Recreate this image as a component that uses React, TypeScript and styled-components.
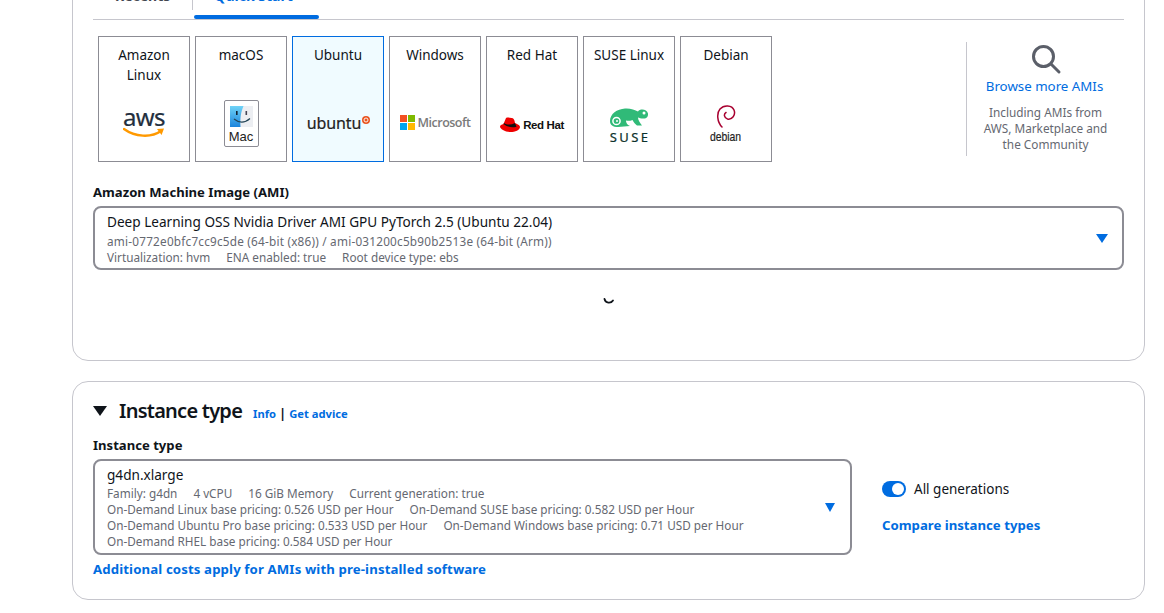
import React from "react";
import styled, { createGlobalStyle } from "styled-components";

const GlobalStyle = createGlobalStyle`
  html, body {
    margin: 0;
    padding: 0;
    background: #fff;
    height: 613px;
    overflow: hidden;
    font-family: "Noto Sans", "Open Sans", sans-serif;
    color: #0f141a;
  }
`;

const Page = styled.div`
  display: flex;
  flex-direction: column;
  gap: 20px;
  margin-top: -41px;
  padding: 0 19px 0 72px;
`;

const Panel = styled.section<{ $height: number }>`
  box-sizing: border-box;
  height: ${(props) => props.$height}px;
  border: 1px solid #c6c6cd;
  border-radius: 16px;
  padding: 0 20px;
  background: #fff;
`;

const Tabs = styled.div`
  display: flex;
  align-items: flex-start;
  height: 60px;
  padding-top: 26px;
  box-sizing: border-box;
  border-bottom: 1px solid #c6c6cd;
`;

const Tab = styled.div<{ $active?: boolean }>`
  position: relative;
  box-sizing: border-box;
  height: 33px;
  font-size: 14px;
  font-weight: 700;
  line-height: 20px;
  padding: 0 ${(props) => (props.$active ? "20px" : "22px")};
  width: ${(props) => (props.$active ? "125px" : "auto")};
  color: ${(props) => (props.$active ? "#006ce0" : "#424650")};
  margin-left: ${(props) => (props.$active ? "1px" : "0")};
  &::after {
    content: "";
    display: ${(props) => (props.$active ? "block" : "none")};
    position: absolute;
    left: 0;
    right: 0;
    bottom: 0;
    height: 4px;
    border-radius: 4px;
    background: #006ce0;
  }
`;

const TabDivider = styled.div`
  width: 1px;
  height: 24px;
  background: #c6c6cd;
`;

const OsRow = styled.div`
  display: flex;
  align-items: flex-start;
  margin-top: 16px;
  padding-left: 5px;
`;

const Cards = styled.div`
  display: flex;
  gap: 5px;
`;

const Card = styled.div<{ $selected?: boolean }>`
  box-sizing: border-box;
  width: 92px;
  height: 126px;
  display: flex;
  flex-direction: column;
  align-items: center;
  padding-top: 8px;
  border: 1px solid ${(props) => (props.$selected ? "#006ce0" : "#8c8c94")};
  background: ${(props) => (props.$selected ? "#f0fbff" : "#fff")};
`;

const CardTitle = styled.div`
  height: 40px;
  font-size: 13.5px;
  line-height: 20px;
  text-align: center;
  white-space: pre-line;
  color: #0f141a;
`;

const LogoSlot = styled.div`
  flex: 1;
  align-self: stretch;
  display: flex;
  align-items: center;
  justify-content: center;
  padding-bottom: 4px;
`;

const AwsLogo = styled.div`
  display: flex;
  flex-direction: column;
  align-items: center;
  gap: 1px;
  margin-top: 3px;
`;

const AwsWord = styled.span`
  font-size: 24px;
  line-height: 19px;
  letter-spacing: -0.6px;
  -webkit-text-stroke: 0.2px #232f3e;
  color: #232f3e;
`;

const MacBox = styled.div`
  box-sizing: border-box;
  width: 35px;
  height: 47px;
  margin-top: 5px;
  display: flex;
  flex-direction: column;
  align-items: center;
  padding-top: 5px;
  border: 1px solid #8c8c94;
  border-radius: 2px;
`;

const MacLabel = styled.span`
  font-family: "Liberation Sans", sans-serif;
  font-size: 13px;
  line-height: 16px;
  margin-top: 2px;
  color: #222;
`;

const UbuntuLogo = styled.div`
  display: flex;
  align-items: flex-start;
  gap: 1px;
  margin-top: 4px;
  margin-left: 1px;
`;

const UbuntuWord = styled.span`
  font-size: 16px;
  line-height: 20px;
  letter-spacing: -0.1px;
  -webkit-text-stroke: 0.2px #222;
  color: #222;
`;

const LogoRow = styled.div<{ $top: number }>`
  display: flex;
  align-items: center;
  gap: 3px;
  margin-top: ${(props) => props.$top}px;
`;

const MsWord = styled.span`
  font-family: "Open Sans", sans-serif;
  font-size: 12.5px;
  font-weight: 600;
  letter-spacing: -0.5px;
  color: #7a7a7a;
`;

const RedHatWord = styled.span`
  font-family: "Liberation Sans", sans-serif;
  font-size: 11.5px;
  font-weight: 700;
  letter-spacing: -0.4px;
  color: #111;
`;

const LogoStack = styled.div<{ $gap: number; $top: number }>`
  display: flex;
  flex-direction: column;
  align-items: center;
  gap: ${(props) => props.$gap}px;
  margin-top: ${(props) => props.$top}px;
`;

const SuseWord = styled.span`
  font-size: 13px;
  line-height: 14px;
  letter-spacing: 2.4px;
  margin-right: -2px;
  -webkit-text-stroke: 0.2px #0c322c;
  color: #0c322c;
`;

const DebianWord = styled.span`
  font-family: "Liberation Sans", sans-serif;
  font-size: 13px;
  line-height: 13px;
  -webkit-text-stroke: 0.2px #222;
  transform: scaleX(0.8);
  color: #222;
`;

const BrowseBox = styled.div`
  box-sizing: border-box;
  width: 158px;
  height: 114px;
  margin: 6px 0 0 auto;
  border-left: 1px solid #c6c6cd;
  display: flex;
  flex-direction: column;
  align-items: center;
`;

const SearchIcon = styled.svg`
  margin-top: 2px;
`;

const BrowseLink = styled.div`
  font-size: 13.3px;
  line-height: 18px;
  margin-top: 1px;
  margin-right: 2px;
  color: #006ce0;
`;

const BrowseNote = styled.div`
  font-size: 11.8px;
  line-height: 16px;
  margin-top: 9px;
  text-align: center;
  color: #656871;
`;

const FieldLabel = styled.div<{ $top: number }>`
  font-size: 13.1px;
  font-weight: 700;
  line-height: 18px;
  margin-top: ${(props) => props.$top}px;
  margin-bottom: 5px;
  color: #0f141a;
`;

const SelectBox = styled.div<{ $width?: number; $height: number; $end: number }>`
  box-sizing: border-box;
  width: ${(props) => (props.$width ? `${props.$width}px` : "100%")};
  height: ${(props) => props.$height}px;
  display: flex;
  align-items: center;
  justify-content: space-between;
  padding: 0 ${(props) => props.$end}px 0 12px;
  border: 2px solid #8c8c94;
  border-radius: 8px;
  background: #fff;
`;

const SelectText = styled.div<{ $gap: number }>`
  display: flex;
  flex-direction: column;
  padding-top: ${(props) => props.$gap}px;
  & > div:first-child {
    margin-bottom: ${(props) => props.$gap}px;
  }
`;

const SelectTitle = styled.div`
  font-size: 13.6px;
  line-height: 18px;
  color: #0f141a;
`;

const SelectLine = styled.div`
  display: flex;
  gap: 16px;
  font-size: 11.75px;
  line-height: 16px;
  white-space: nowrap;
  color: #656871;
`;

const AmiIds = styled(SelectLine)`
  letter-spacing: 0.22px;
`;

const Caret = styled.svg`
  flex: none;
  fill: #006ce0;
`;

const SpinnerSlot = styled.div`
  display: flex;
  justify-content: center;
  margin-top: 27px;
  margin-left: 1px;
`;

const PanelHeader = styled.div`
  display: flex;
  align-items: center;
  height: 28px;
  margin-top: 15px;
`;

const Expand = styled.svg`
  flex: none;
  margin-right: 12px;
  fill: #0f141a;
`;

const Heading = styled.h2`
  margin: 0 11px 0 0;
  font-size: 20px;
  font-weight: 600;
  line-height: 24px;
  letter-spacing: -0.75px;
  color: #0f141a;
`;

const InfoRow = styled.div`
  display: flex;
  align-items: center;
  gap: 3px;
  font-size: 11.2px;
  font-weight: 700;
  margin-top: 4px;
  color: #006ce0;
`;

const InfoBar = styled.span`
  font-size: 13px;
  line-height: 14px;
  font-weight: 700;
  color: #0f141a;
`;

const TypeRow = styled.div`
  display: flex;
  align-items: flex-start;
`;

const SidePanel = styled.div`
  display: flex;
  flex-direction: column;
  margin: 21px 0 0 30px;
`;

const ToggleRow = styled.div`
  display: flex;
  align-items: center;
  gap: 8px;
  font-size: 13.5px;
  line-height: 18px;
  color: #0f141a;
`;

const Toggle = styled.div`
  position: relative;
  width: 24px;
  height: 16px;
  border-radius: 8px;
  background: #006ce0;
  &::after {
    content: "";
    position: absolute;
    top: 2px;
    right: 2px;
    width: 12px;
    height: 12px;
    border-radius: 50%;
    background: #fff;
  }
`;

const BoldLink = styled.div<{ $top: number }>`
  font-size: 13.2px;
  font-weight: 700;
  line-height: 18px;
  margin-top: ${(props) => props.$top}px;
  white-space: nowrap;
  color: #006ce0;
`;

const WideLink = styled(BoldLink)`
  letter-spacing: 0.13px;
`;

const AmazonSmile = () => (
  <svg width="42" height="12" viewBox="0 0 42 12">
    <path d="M1 2 C12 10 28 11 38 4" fill="none" stroke="#f90" strokeWidth="2.4" strokeLinecap="round" />
    <path d="M34 2 L41 1.6 L38.6 8 Z" fill="#f90" />
  </svg>
);

const FinderIcon = () => (
  <svg width="23" height="21" viewBox="0 0 23 21">
    <defs>
      <linearGradient id="finderBlue" x1="0" y1="0" x2="0" y2="1">
        <stop offset="0" stopColor="#6fd3f7" />
        <stop offset="1" stopColor="#1b84dc" />
      </linearGradient>
    </defs>
    <rect width="23" height="21" fill="#eceef2" />
    <path d="M0 0 H13.500 C11 6 10 11 10.500 21 H0 Z" fill="url(#finderBlue)" />
    <rect x="6" y="5" width="1.600" height="4" fill="#123" />
    <rect x="15.500" y="5" width="1.600" height="4" fill="#445" />
    <path d="M4 13 C9 17 15 17 20 12.500" fill="none" stroke="#245" strokeWidth="1.100" />
  </svg>
);

const UbuntuMark = () => (
  <svg width="8" height="8" viewBox="0 0 8 8" style={{ marginTop: 3 }}>
    <circle cx="4" cy="4" r="4" fill="#e95420" />
    <circle cx="4" cy="4" r="2" fill="none" stroke="#fff" strokeWidth="0.900" />
  </svg>
);

const MicrosoftMark = () => (
  <svg width="15" height="15" viewBox="0 0 15 15">
    <rect width="7" height="7" fill="#f25022" />
    <rect x="8" width="7" height="7" fill="#7fba00" />
    <rect y="8" width="7" height="7" fill="#00a4ef" />
    <rect x="8" y="8" width="7" height="7" fill="#ffb900" />
  </svg>
);

const RedHatMark = () => (
  <svg width="20" height="16" viewBox="0 0 20 16">
    <path d="M6 1 C8 0 10 1 11.500 1 C13 1 14.500 2 15 6 C17 7 20 8 20 10 C20 13 15 15 10.500 15 C5 15 0 12 0 9.500 C0 8.300 1.500 7.500 3.500 7 Z" fill="#e00" />
    <path d="M3.500 7 C7 10 12 11 16.500 9.700 L15 6 C11 8 7 8 4 6 Z" fill="#111" />
  </svg>
);

const SuseMark = () => (
  <svg width="39" height="20" viewBox="0 0 39 20">
    <path d="M0 13 C0 6 7 1 15 0.500 C20 0 25 2 28 3.500 C30 0.500 37 1 38 5.500 C38.500 9 36 11 33 10.500 C31 10.500 29 10 28 9.500 C28 12 30 15 32 17.500 L27 17.500 C25 16 23.500 14 22.500 12 C20 13 18 13 16 12.500 C16 16 19 17.500 20 18 L8 19 C3 19 0 17 0 13 Z" fill="#30ba78" />
    <circle cx="6.500" cy="13" r="3.600" fill="none" stroke="#fff" strokeWidth="1.500" />
    <circle cx="7" cy="13" r="1" fill="#fff" />
    <circle cx="34" cy="5" r="1.500" fill="#fff" />
  </svg>
);

const DebianSwirl = () => (
  <svg width="20" height="24" viewBox="0 0 20 24">
    <path d="M6 23 C1 18 0.500 9 4 5 C8 0.500 16 1 18 6 C20 11 16 16 11.500 15 C8 14 7.500 10 10 8.500" fill="none" stroke="#a80030" strokeWidth="1.500" strokeLinecap="round" />
  </svg>
);

const osCards = [
  {
    name: "Amazon\nLinux",
    logo: (
      <AwsLogo>
        <AwsWord>aws</AwsWord>
        <AmazonSmile />
      </AwsLogo>
    ),
  },
  {
    name: "macOS",
    logo: (
      <MacBox>
        <FinderIcon />
        <MacLabel>Mac</MacLabel>
      </MacBox>
    ),
  },
  {
    name: "Ubuntu",
    selected: true,
    logo: (
      <UbuntuLogo>
        <UbuntuWord>ubuntu</UbuntuWord>
        <UbuntuMark />
      </UbuntuLogo>
    ),
  },
  {
    name: "Windows",
    logo: (
      <LogoRow $top={2}>
        <MicrosoftMark />
        <MsWord>Microsoft</MsWord>
      </LogoRow>
    ),
  },
  {
    name: "Red Hat",
    logo: (
      <LogoRow $top={8}>
        <RedHatMark />
        <RedHatWord>Red Hat</RedHatWord>
      </LogoRow>
    ),
  },
  {
    name: "SUSE Linux",
    logo: (
      <LogoStack $gap={2} $top={9}>
        <SuseMark />
        <SuseWord>SUSE</SuseWord>
      </LogoStack>
    ),
  },
  {
    name: "Debian",
    logo: (
      <LogoStack $gap={2} $top={4}>
        <DebianSwirl />
        <DebianWord>debian</DebianWord>
      </LogoStack>
    ),
  },
];

const CaretIcon = ({ width, height }: { width: number; height: number }) => (
  <Caret width={width} height={height} viewBox="0 0 12 9" preserveAspectRatio="none">
    <path d="M0 0 H12 L6 9 Z" />
  </Caret>
);

export default function App() {
  return (
    <Page>
      <GlobalStyle />
      <Panel $height={402}>
        <Tabs>
          <Tab>Recents</Tab>
          <TabDivider />
          <Tab $active>Quick Start</Tab>
        </Tabs>
        <OsRow>
          <Cards>
            {osCards.map((card) => (
              <Card key={card.name} $selected={card.selected}>
                <CardTitle>{card.name}</CardTitle>
                <LogoSlot>{card.logo}</LogoSlot>
              </Card>
            ))}
          </Cards>
          <BrowseBox>
            <SearchIcon width="32" height="32" viewBox="0 0 32 32">
              <circle cx="13.500" cy="12.500" r="10" fill="none" stroke="#5b5f69" strokeWidth="3" />
              <path d="M21 20 L29 28" stroke="#5b5f69" strokeWidth="3" strokeLinecap="round" />
            </SearchIcon>
            <BrowseLink>Browse more AMIs</BrowseLink>
            <BrowseNote>
              Including AMIs from
              <br />
              AWS, Marketplace and
              <br />
              the Community
            </BrowseNote>
          </BrowseBox>
        </OsRow>
        <FieldLabel $top={21}>Amazon Machine Image (AMI)</FieldLabel>
        <SelectBox $height={64} $end={14}>
          <SelectText $gap={2}>
            <SelectTitle>Deep Learning OSS Nvidia Driver AMI GPU PyTorch 2.5 (Ubuntu 22.04)</SelectTitle>
            <AmiIds>ami-0772e0bfc7cc9c5de (64-bit (x86)) / ami-031200c5b90b2513e (64-bit (Arm))</AmiIds>
            <SelectLine>
              <span>Virtualization: hvm</span>
              <span>ENA enabled: true</span>
              <span>Root device type: ebs</span>
            </SelectLine>
          </SelectText>
          <CaretIcon width={12} height={9} />
        </SelectBox>
        <SpinnerSlot>
          <svg width="12" height="10" viewBox="0 0 12 10">
            <path d="M1.500 2 C2.500 6.500 8 6.500 10 3.500" fill="none" stroke="#0f141a" strokeWidth="1.800" strokeLinecap="round" />
          </svg>
        </SpinnerSlot>
      </Panel>
      <Panel $height={219}>
        <PanelHeader>
          <Expand width="14" height="10" viewBox="0 0 14 10">
            <path d="M0 0 H14 L7 10 Z" />
          </Expand>
          <Heading>Instance type</Heading>
          <InfoRow>
            <span>Info</span>
            <InfoBar>|</InfoBar>
            <span>Get advice</span>
          </InfoRow>
        </PanelHeader>
        <FieldLabel $top={11}>Instance type</FieldLabel>
        <TypeRow>
          <SelectBox $width={759} $height={96} $end={15}>
            <SelectText $gap={1}>
              <SelectTitle>g4dn.xlarge</SelectTitle>
              <SelectLine>
                <span>Family: g4dn</span>
                <span>4 vCPU</span>
                <span>16 GiB Memory</span>
                <span>Current generation: true</span>
              </SelectLine>
              <SelectLine>
                <span>On-Demand Linux base pricing: 0.526 USD per Hour</span>
                <span>On-Demand SUSE base pricing: 0.582 USD per Hour</span>
              </SelectLine>
              <SelectLine>
                <span>On-Demand Ubuntu Pro base pricing: 0.533 USD per Hour</span>
                <span>On-Demand Windows base pricing: 0.71 USD per Hour</span>
              </SelectLine>
              <SelectLine>
                <span>On-Demand RHEL base pricing: 0.584 USD per Hour</span>
              </SelectLine>
            </SelectText>
            <CaretIcon width={10} height={9} />
          </SelectBox>
          <SidePanel>
            <ToggleRow>
              <Toggle />
              All generations
            </ToggleRow>
            <BoldLink $top={18}>Compare instance types</BoldLink>
          </SidePanel>
        </TypeRow>
        <WideLink $top={5}>Additional costs apply for AMIs with pre-installed software</WideLink>
      </Panel>
    </Page>
  );
}
